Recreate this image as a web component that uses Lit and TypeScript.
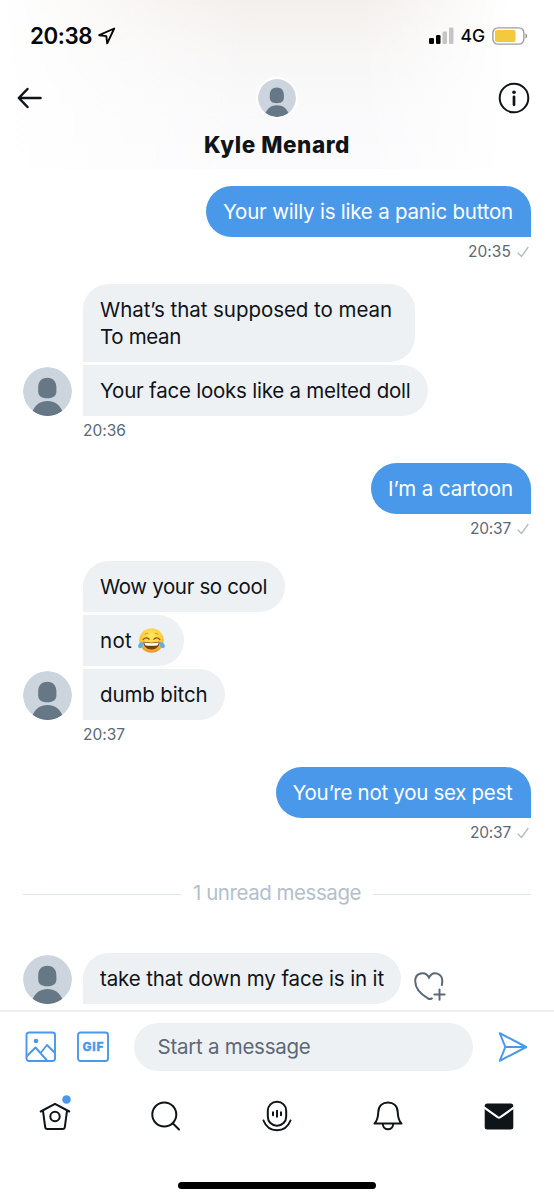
import { LitElement, html, css, nothing } from "lit";
import { customElement, property } from "lit/decorators.js";
import { classMap } from "lit/directives/class-map.js";

/** A run of text tracked out (or in) so that it fills a given width. */
@customElement("fit-text")
class FitText extends LitElement {
  @property({ type: Number }) width = 0;
  @property() text = "";
  static styles = css`
    :host { display: inline-block; white-space: nowrap; }
    .run { display: inline-block; white-space: pre; }
  `;
  render() {
    return html`<span class="run">${this.text}</span>`;
  }
  updated() {
    const run = this.renderRoot.querySelector(".run") as HTMLElement;
    run.style.letterSpacing = "0px";
    const natural = run.getBoundingClientRect().width;
    const n = Array.from(this.text).length;
    if (this.width && n > 1) run.style.letterSpacing = (this.width - natural) / n + "px";
  }
}

@customElement("user-avatar")
class UserAvatar extends LitElement {
  static styles = css`
    :host { display: block; }
    svg { display: block; width: 100%; height: 100%; border-radius: 50%; }
  `;
  render() {
    return html`<svg viewBox="0 0 49 49">
      <circle cx="24.5" cy="24.5" r="24.5" fill="#ccd5dd" />
      <path d="M24.300 10.800c6 0 9.100 4 9.100 9.700v3.500c0 5-3 7.300-9.100 7.300s-9.100-2.300-9.100-7.300v-3.500C15.200 14.800 18.300 10.800 24.300 10.800z" fill="#667786" />
      <path d="M9.600 44C12.500 37.500 17.500 34 24.500 34s12 3.500 14.900 10a24.500 24.500 0 0 1-29.800 0z" fill="#667786" />
    </svg>`;
  }
}

interface Line { text: string; w: number }
interface Bubble { lines: Line[]; width: number; emoji?: boolean }
interface Group { mine: boolean; time?: string; timeWidth?: number; bubbles: Bubble[]; react?: boolean }

const one = (text: string, w: number, width: number): Bubble => ({ lines: [{ text, w }], width });

const groups: Group[] = [
  { mine: true, time: "20:35", timeWidth: 43, bubbles: [one("Your willy is like a panic button", 290, 325)] },
  {
    mine: false, time: "20:36", timeWidth: 43, bubbles: [
      { lines: [{ text: "What’s that supposed to mean", w: 292 }, { text: "To mean", w: 81 }], width: 332 },
      one("Your face looks like a melted doll", 310.5, 345),
    ],
  },
  { mine: true, time: "20:37", timeWidth: 41, bubbles: [one("I’m a cartoon", 125, 160)] },
  {
    mine: false, time: "20:37", timeWidth: 42, bubbles: [
      one("Wow your so cool", 167, 202),
      { lines: [{ text: "not ", w: 38 }], width: 101, emoji: true },
      one("dumb bitch", 107.5, 142),
    ],
  },
  { mine: true, time: "20:37", timeWidth: 41, bubbles: [one("You’re not you sex pest", 220, 255.5)] },
];

const last: Group = { mine: false, react: true, bubbles: [one("take that down my face is in it", 284, 318)] };

const joy = html`<svg class="joy" viewBox="0 0 27 26" role="img" aria-label="😂">
  <defs><radialGradient id="skin" cx=".5" cy=".3" r=".72">
    <stop offset="0" stop-color="#ffe95c" /><stop offset=".6" stop-color="#fbcb3a" /><stop offset="1" stop-color="#e5922a" />
  </radialGradient></defs>
  <circle cx="13.500" cy="12.500" r="12.200" fill="url(#skin)" />
  <path d="M5.200 11.500c1.800-1.900 3.900-2.100 6-.3M21.800 11.500c-1.800-1.900-3.900-2.100-6-.3" fill="none" stroke="#855017" stroke-width="1.200" stroke-linecap="round" />
  <path d="M7 6.500c.9-.8 1.700-1.200 2.700-1.300M20 6.500c-.9-.8-1.700-1.200-2.700-1.300" fill="none" stroke="#b97a22" stroke-width=".8" stroke-linecap="round" />
  <path d="M5.500 13.800c5 1.100 11 1.100 16 0 .3 4.600-3.200 7.700-8 7.700s-8.300-3.100-8-7.700z" fill="#7a3d16" />
  <path d="M6.300 14.500c4.600.9 9.800.9 14.400 0-.2 1.500-.8 2.400-1.400 2.900-3.600.6-8 .6-11.600 0-.8-.7-1.200-1.600-1.400-2.900z" fill="#fff" />
  <path d="M4.800 14C2 14.400.200 16 .200 18c0 1.700 1.300 2.500 2.600 2.100 1.900-.6 2.400-3.400 2-6.100zM22.200 14c2.800.4 4.600 2 4.600 4 0 1.700-1.300 2.500-2.600 2.100-1.900-.6-2.400-3.400-2-6.100z" fill="#4fb2ee" />
</svg>`;

@customElement("app-root")
class AppRoot extends LitElement {
  static styles = css`
    :host {
      display: flex; flex-direction: column; width: 554px; height: 1200px; overflow: hidden;
      background: #fff; color: #0f1419; font-family: Inter, "Liberation Sans", sans-serif;
    }
    * { box-sizing: border-box; }
    svg { display: block; flex: none; }
    header {
      flex: none; height: 169px; display: flex; flex-direction: column;
      background:
        linear-gradient(to right, #fff 0, rgba(255,255,255,0) 45%, rgba(255,255,255,0) 65%, #fff 92%),
        linear-gradient(#f3efec 0, #f7f5f4 25%, #f9f9fa 55%, #fbfbfd 100%);
    }
    .status { height: 71px; display: flex; align-items: center; padding: 0 26px 0 30px; color: #060606; }
    .clock { font-size: 22.300px; font-weight: 600; line-height: 28px; }
    .loc { margin-left: 6px; }
    .push { flex: 1; }
    .net { font-size: 17.500px; font-weight: 500; line-height: 28px; margin: 0 7px 0 7px; }
    .bar { height: 53px; display: flex; align-items: center; justify-content: space-between; padding: 1px 24px 0 17px; }
    .bar user-avatar { width: 42px; height: 42px; border: 2px solid #fff; border-radius: 50%; margin-left: 14px; }
    .name { display: flex; justify-content: center; font-weight: 800; font-size: 22.500px; line-height: 41px; }

    main { flex: none; height: 841px; padding: 17px 23px 0; display: flex; flex-direction: column; }
    .group { display: grid; grid-template-columns: 60px 1fr; align-items: end; margin-bottom: 19px; }
    .group > user-avatar { width: 49px; height: 49px; }
    .stack { grid-column: 2; display: flex; flex-direction: column; align-items: flex-start; gap: 3px; }
    .mine .stack { align-items: flex-end; }
    .bubble { padding: 12px 17px; border-radius: 0 25.500px 25.500px 0; background: #eef1f3; font-size: 20.500px; line-height: 27px; }
    .bubble:first-child { border-top-left-radius: 25.500px; }
    .mine .bubble { background: #4a98ea; color: #fff; border-radius: 25.500px 25.500px 0 25.500px; }
    .line { display: flex; align-items: center; height: 27px; }
    .joy { width: 27px; height: 26px; }
    .meta { grid-column: 2; height: 28px; padding-top: 1px; display: flex; align-items: center; gap: 6px; font-size: 15.500px; line-height: 27px; color: #5b6875; }
    .mine .meta { justify-content: flex-end; padding-right: 2px; }
    .unread { display: flex; align-items: center; gap: 12px; height: 28px; margin: 14px 0 45.500px; font-size: 20.500px; line-height: 28px; color: #b3bfca; }
    .unread::before, .unread::after { content: ""; flex: 1; height: 1px; background: #dfe4e8; margin-top: 2px; }
    .row { display: flex; align-items: flex-end; }
    .heart { margin-left: 13px; }

    .composer { flex: none; height: 72px; border-top: 2px solid #eeecee; display: flex; align-items: center; padding: 0 26px 1px 25px; color: #4a98ea; }
    .gif { margin-left: 21px; }
    .gif text { font: 800 12px Inter, sans-serif; }
    .field { width: 339px; height: 48px; border-radius: 24px; background: #eef1f3; margin: 0 25px 0 25px; padding-left: 23.500px; font-size: 20.500px; line-height: 48px; color: #5b6875; }
    nav { flex: none; height: 70px; padding-bottom: 2px; display: grid; grid-template-columns: repeat(5, 1fr); justify-items: center; align-items: center; }
    .nest { margin-bottom: 6px; }
    .home { width: 198px; height: 7px; border-radius: 4px; background: #000; margin: 29.500px auto 0; flex: none; }
  `;

  private bubble(b: Bubble) {
    return html`<div class="bubble" style="width:${b.width}px">
      ${b.lines.map((l) => html`<div class="line"><fit-text .text=${l.text} .width=${l.w}></fit-text>${b.emoji ? joy : nothing}</div>`)}
    </div>`;
  }

  private group(g: Group) {
    const stack = html`<div class="stack">${g.bubbles.map((b) => this.bubble(b))}</div>`;
    return html`<section class=${classMap({ group: true, mine: g.mine })}>
      ${g.mine ? nothing : html`<user-avatar></user-avatar>`}
      ${g.react
        ? html`<div class="row">${stack}
            <svg class="heart" width="32" height="33" viewBox="0 0 32 33" fill="none" stroke="#5b6875" stroke-width="2" stroke-linecap="round">
              <path d="M17.800 27.400c-1.300.9-2.600.9-3.900 0C6.500 23 1.200 16.500 1.200 10 1.200 1.500 11.500-.500 15 6.600 18.700-.700 29 1.700 28.200 11.300l-.3 2.600" />
              <path d="M25.500 18.500v10.300M20.400 23.600h10.200" />
            </svg></div>`
        : stack}
      ${g.time
        ? html`<div class="meta"><fit-text .text=${g.time} .width=${g.timeWidth ?? 0}></fit-text>
            ${g.mine ? html`<svg width="12" height="12" viewBox="0 0 12 12" fill="none" stroke="#b3bbc1" stroke-width="1.300"><path d="M.8 6.800l3.700 3.700L11.300 1" /></svg>` : nothing}
          </div>`
        : nothing}
    </section>`;
  }

  render() {
    return html`
      <header>
        <div class="status">
          <fit-text class="clock" text="20:38" .width=${62}></fit-text>
          <svg class="loc" width="18" height="18" viewBox="0 0 18 18" fill="none" stroke="#060606" stroke-width="1.900" stroke-linejoin="round"><path d="M16.200 1.500L1.200 8.200l7.100.900.900 7.200z" /></svg>
          <span class="push"></span>
          <svg width="25" height="17" viewBox="0 0 25 17"><rect x="0" y="11" width="5" height="6" rx="1.300" fill="#060606" /><rect x="7" y="8" width="4.500" height="9" rx="1.300" fill="#060606" /><rect x="13.500" y="4.500" width="4.500" height="12.500" rx="1.300" fill="#c6c5c4" /><rect x="20" y="0.500" width="4.500" height="16.500" rx="1.300" fill="#c6c5c4" /></svg>
          <fit-text class="net" text="4G" .width=${24.5}></fit-text>
          <svg width="36" height="18" viewBox="0 0 36 18"><rect x=".9" y=".9" width="31" height="16.200" rx="5" fill="#fff" stroke="#a09e9b" stroke-width="1.400" /><rect x="3" y="3" width="20.500" height="12" rx="2" fill="#f3ca3e" /><path d="M33.500 6.500c2.200.8 2.200 4.200 0 5z" fill="#8f8d8b" /></svg>
        </div>
        <div class="bar">
          <svg width="25" height="22" viewBox="0 0 25 22" fill="none" stroke="#0f1419" stroke-width="2.500" stroke-linecap="round" stroke-linejoin="round"><path d="M10.500 2L1.800 11l8.700 9M2 11h21.500" /></svg>
          <user-avatar></user-avatar>
          <svg width="32" height="32" viewBox="0 0 32 32" fill="none" stroke="#0f1419"><circle cx="16" cy="16" r="14.300" stroke-width="2" /><path d="M16 14.800v8" stroke-width="2.700" stroke-linecap="round" /><circle cx="16" cy="10.200" r="1.800" fill="#0f1419" stroke="none" /></svg>
        </div>
        <div class="name"><fit-text text="Kyle Menard" .width=${146}></fit-text></div>
      </header>
      <main>
        ${groups.map((g) => this.group(g))}
        <div class="unread"><fit-text text="1 unread message" .width=${168}></fit-text></div>
        ${this.group(last)}
      </main>
      <div class="composer">
        <svg width="31" height="31" viewBox="0 0 31 31" fill="none" stroke="#4a98ea" stroke-width="1.900" stroke-linejoin="round"><rect x="1.500" y="1.500" width="28.500" height="28.500" rx="2.500" /><path d="M1.500 25.500L10.500 16.500 22 29.500M16 21.500L22 14l8 8" /><circle cx="11" cy="10" r="2.300" fill="#4a98ea" stroke="none" /></svg>
        <svg class="gif" width="32" height="31" viewBox="0 0 32 31"><rect x="1" y="1.500" width="30" height="28.500" rx="2.500" fill="none" stroke="#4a98ea" stroke-width="1.900" /><text x="16" y="20" text-anchor="middle" textLength="21" fill="#4a98ea" stroke="#4a98ea" stroke-width=".3">GIF</text></svg>
        <div class="field"><fit-text text="Start a message" .width=${153}></fit-text></div>
        <svg width="30" height="32" viewBox="0 0 30 32" fill="none" stroke="#4a98ea" stroke-width="2" stroke-linejoin="round"><path d="M1.800 2.200L28.200 16 1.800 29.800 7.300 16zM7.300 16h20.500" /></svg>
      </div>
      <nav>
        <svg class="nest" width="34" height="40" viewBox="0 0 34 40" fill="none" stroke="#0f1419" stroke-width="2" stroke-linecap="round" stroke-linejoin="round"><path d="M2.700 18.500L17 10.800l14.300 7.700M5 18l2.200 16.200c.2 1.300.9 1.900 2 1.900h15.600c1.100 0 1.800-.6 2-1.900L29 18" /><circle cx="17" cy="23.500" r="4.700" /><circle cx="28.500" cy="6.500" r="4.300" fill="#4a98ea" stroke="none" /></svg>
        <svg width="32" height="32" viewBox="0 0 32 32" fill="none" stroke="#0f1419" stroke-width="2" stroke-linecap="round"><circle cx="14.300" cy="14.500" r="12" /><path d="M23 23.500l6 6" /></svg>
        <svg width="32" height="32" viewBox="0 0 32 32" fill="none" stroke="#0f1419" stroke-width="2" stroke-linecap="round"><rect x="6.800" y="1.700" width="18.400" height="24" rx="9" /><path d="M2.500 20.500c5 13 22 13 27 0M16 10.700v6M12 12.200v3M20 12.200v3" /></svg>
        <svg width="32" height="32" viewBox="0 0 32 32" fill="none" stroke="#0f1419" stroke-width="2" stroke-linecap="round" stroke-linejoin="round"><path d="M2.500 23.500c3-2.800 3.500-5.500 3.800-11.500C6.500 6 10.500 2.500 16 2.500S25.500 6 25.700 12c.3 6 .8 8.700 3.800 11.500zM10.800 24c.5 7 9.900 7 10.400 0" /></svg>
        <svg width="30" height="28" viewBox="0 0 30 28"><rect x=".7" y="1.500" width="28.600" height="26" rx="2.500" fill="#0f1419" /><path d="M0 5.500l13.600 9.600q1.400.9 2.800 0L30 5.500" fill="none" stroke="#fff" stroke-width="2.200" /></svg>
      </nav>
      <div class="home"></div>
    `;
  }
}
